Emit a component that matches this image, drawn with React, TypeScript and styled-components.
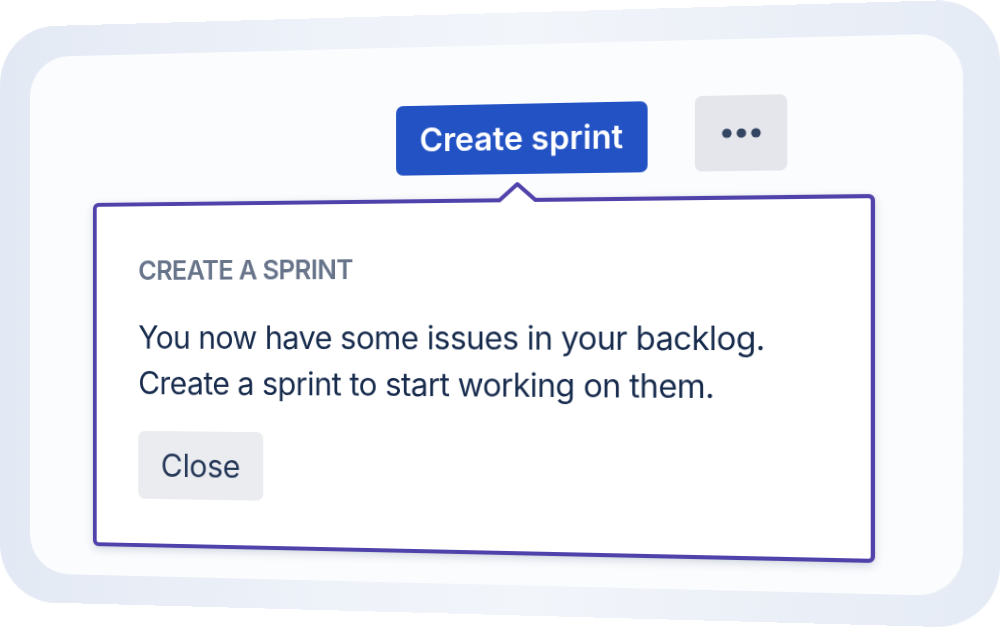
import React from "react";
import styled, { createGlobalStyle } from "styled-components";

const GlobalStyle = createGlobalStyle`
  html, body {
    margin: 0;
    padding: 0;
    background: #ffffff;
  }
  body {
    width: 1000px;
    height: 638px;
    overflow: hidden;
    font-family: Inter, "Noto Sans", "Liberation Sans", sans-serif;
    -webkit-font-smoothing: antialiased;
  }
  #root {
    width: 1000px;
    height: 638px;
  }
`;

const Stage = styled.div`
  width: 1000px;
  height: 638px;
  overflow: hidden;
  background: #ffffff;
`;

/* The whole card is drawn flat, then tilted with one perspective matrix
   (left side farther away than the right). */
const Frame = styled.div`
  box-sizing: border-box;
  width: 1008px;
  height: 601px;
  padding: 32px 34px 30px 33px;
  border-radius: 60px;
  background: linear-gradient(90deg, #e3e9f4 0%, #eef2f9 35%, #f2f5fa 55%, #e5ebf5 100%);
  transform-origin: 0 0;
  transform: matrix3d(
    0.90362, -0.028437, 0, -0.000088386,
    0, 0.95479, 0, 0,
    0, 0, 1, 0,
    -0.0076, 27.433, 0, 1
  );
`;

const Panel = styled.div`
  box-sizing: border-box;
  width: 941px;
  height: 539px;
  border-radius: 42px;
  background: #fbfcfe;
  padding: 55px 0 0 69px;
`;

const Content = styled.div`
  width: 790px;
  display: flex;
  flex-direction: column;
`;

const ButtonRow = styled.div`
  display: flex;
  justify-content: flex-end;
  align-items: flex-end;
  gap: 46px;
  padding-right: 83px;
  margin-bottom: 24px;
`;

const PrimaryButton = styled.button`
  box-sizing: border-box;
  width: 252px;
  height: 70px;
  border: none;
  border-radius: 7px;
  background: #2352c4;
  color: #ffffff;
  font-family: Inter, "Noto Sans", sans-serif;
  font-weight: 600;
  font-size: 32.5px;
  line-height: 70px;
  padding: 0;
  display: flex;
  align-items: center;
  justify-content: center;
`;

const MoreButton = styled.button`
  box-sizing: border-box;
  width: 89px;
  height: 74px;
  border: none;
  border-radius: 7px;
  background: #e5e6eb;
  padding: 0;
  display: flex;
  align-items: center;
  justify-content: center;
`;

const Spotlight = styled.div`
  position: relative;
  box-sizing: border-box;
  width: 790px;
  height: 356px;
  border: 4px solid #5042ab;
  border-radius: 6px;
  background: #ffffff;
  padding: 51px 45px 46px 45px;
  box-shadow: 0 3px 10px rgba(9, 30, 66, 0.16), 0 0 2px rgba(9, 30, 66, 0.12);
  display: flex;
  flex-direction: column;
  align-items: flex-start;
`;

const Caret = styled.svg`
  position: absolute;
  top: -23px;
  left: 415px;
  width: 48px;
  height: 26px;
  overflow: visible;
`;

const Heading = styled.h4`
  margin: 0;
  font-family: Inter, "Noto Sans", sans-serif;
  font-weight: 600;
  font-size: 27px;
  line-height: 32px;
  color: #67748a;
  letter-spacing: -0.7px;
  text-transform: uppercase;
`;

const Body = styled.p`
  margin: 29px 0 0 0;
  font-family: Inter, "Noto Sans", sans-serif;
  font-weight: 400;
  font-size: 32px;
  line-height: 47px;
  letter-spacing: -0.55px;
  color: #172b4d;
`;

const SecondaryButton = styled.button`
  box-sizing: border-box;
  margin-top: 26px;
  width: 133px;
  height: 70px;
  border: none;
  border-radius: 7px;
  background: #ebecf0;
  color: #253858;
  font-family: Inter, "Noto Sans", sans-serif;
  font-weight: 400;
  font-size: 32px;
  letter-spacing: -0.3px;
  padding: 0;
  display: flex;
  align-items: center;
  justify-content: center;
`;

function Dots() {
  return (
    <svg width="40" height="12" viewBox="0 0 40 12">
      <circle cx="6" cy="6" r="4.6" fill="#344563" />
      <circle cx="20" cy="6" r="4.6" fill="#344563" />
      <circle cx="34" cy="6" r="4.6" fill="#344563" />
    </svg>
  );
}

export default function App() {
  return (
    <>
      <GlobalStyle />
      <Stage>
        <Frame>
          <Panel>
            <Content>
              <ButtonRow>
                <PrimaryButton>Create sprint</PrimaryButton>
                <MoreButton aria-label="More">
                  <Dots />
                </MoreButton>
              </ButtonRow>
              <Spotlight>
                <Caret viewBox="0 0 48 26">
                  <polygon points="6,21 24,5 42,21 42,26 6,26" fill="#ffffff" />
                  <polyline
                    points="0,21 6,21 24,5 42,21 48,21"
                    fill="none"
                    stroke="#5042ab"
                    strokeWidth="4"
                    strokeLinejoin="round"
                  />
                </Caret>
                <Heading>Create a sprint</Heading>
                <Body>
                  You now have some issues in your backlog.
                  <br />
                  Create a sprint to start working on them.
                </Body>
                <SecondaryButton>Close</SecondaryButton>
              </Spotlight>
            </Content>
          </Panel>
        </Frame>
      </Stage>
    </>
  );
}
